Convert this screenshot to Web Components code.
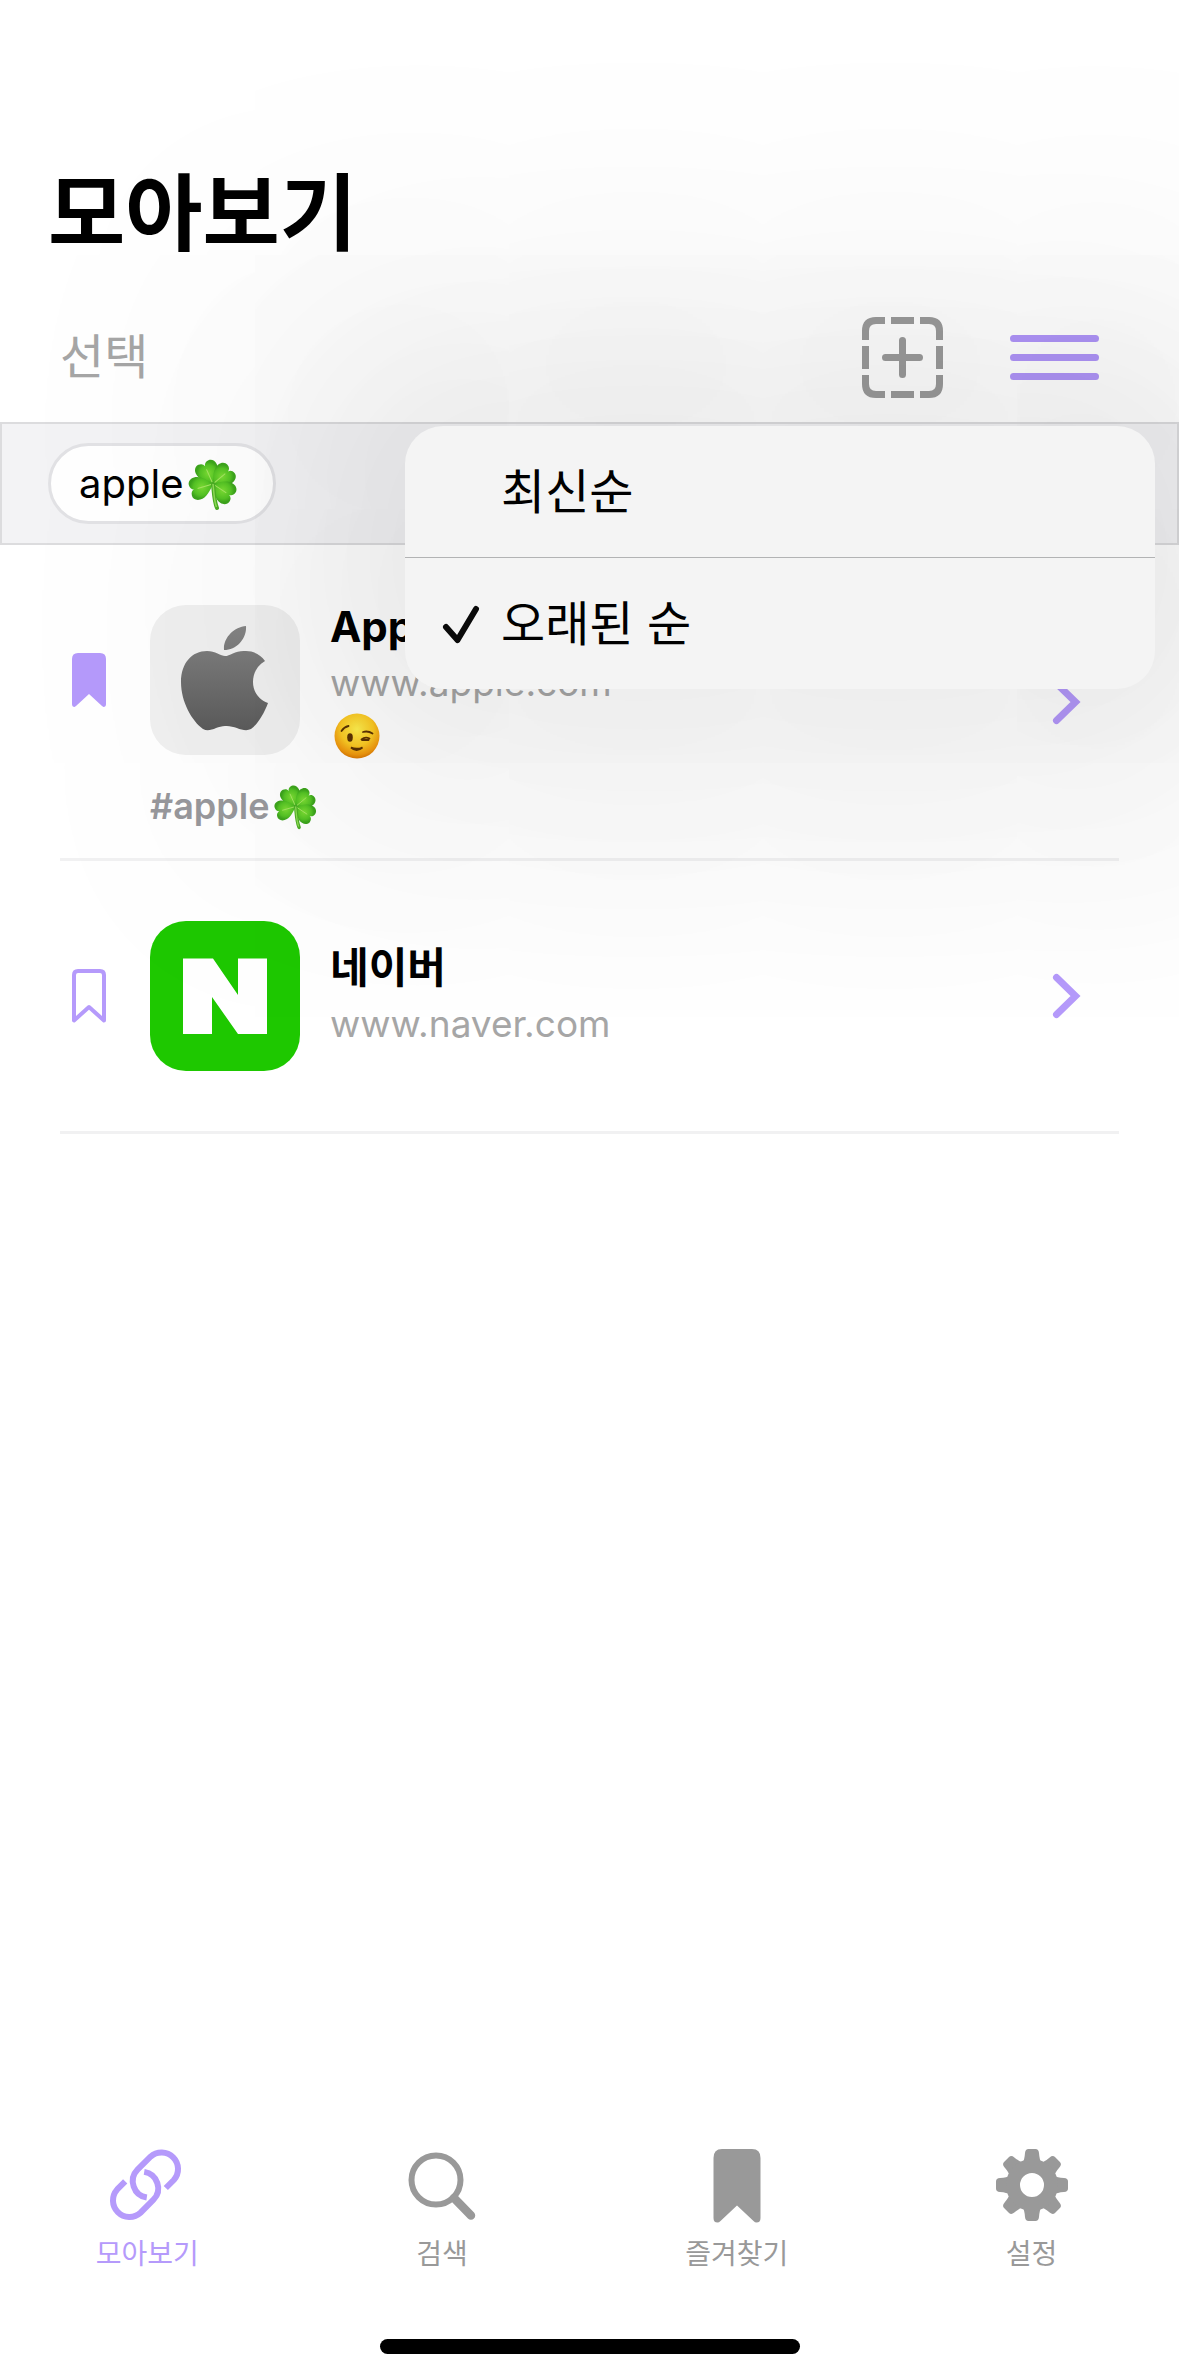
<!DOCTYPE html>
<html lang="ko">
<head>
<meta charset="utf-8">
<meta name="viewport" content="width=device-width, initial-scale=1">
<title>모아보기</title>
<style>
  html, body { margin: 0; }
  body { font-family: Inter, "Noto Sans CJK KR", sans-serif; background: #fff; color: #000; }
</style>
</head>
<body>
<moa-app></moa-app>

<template id="t-app">
  <style>
    :host { display: flex; flex-direction: column; min-height: 100vh; position: relative; overflow: hidden; }
    header { padding: 166px 48px 32px; }
    h1 { margin: 0; font-size: 84px; line-height: 96px; font-weight: 700; }
    main { flex: 1; padding: 0 60px; }
  </style>
  <header><h1>모아보기</h1></header>
  <moa-toolbar></moa-toolbar>
  <moa-filter><moa-chip>apple</moa-chip></moa-filter>
  <main>
    <moa-link marked>
      <moa-logo slot="logo" kind="apple"></moa-logo>
      <span slot="title">Apple</span>
      <span slot="url">www.apple.com</span>
      <moa-emoji slot="memo" kind="wink"></moa-emoji>
      <span slot="tag">#apple</span>
      <moa-emoji slot="tag" kind="clover"></moa-emoji>
    </moa-link>
    <moa-link>
      <moa-logo slot="logo" kind="naver"></moa-logo>
      <span slot="title">네이버</span>
      <span slot="url">www.naver.com</span>
    </moa-link>
  </main>
  <moa-tabs></moa-tabs>
</template>

<template id="t-toolbar">
  <style>
    :host { display: flex; align-items: center; justify-content: space-between; box-sizing: border-box; height: 128px; padding: 0 80px 2px 60px; position: relative; }
    button { border: 0; background: none; padding: 0; margin: 0; font: inherit; display: block; }
    .select { font-size: 48px; line-height: 64px; color: #a6a6a6; }
    .actions { display: flex; align-items: center; gap: 67px; }
    svg { display: block; }
    moa-menu { position: absolute; top: 132px; right: 24px; z-index: 2; }
  </style>
  <button class="select" type="button">선택</button>
  <div class="actions">
    <button type="button" aria-label="추가">
      <svg width="81" height="81" viewBox="0 0 81 81" fill="none" stroke="#9c9c9c" stroke-width="7">
        <path d="M23 3.500H14Q3.500 3.500 3.500 14V23M29 3.500H52M58 3.500H67Q77.500 3.500 77.500 14V23M77.500 29V52M77.500 58V67Q77.500 77.500 67 77.500H58M52 77.500H29M23 77.500H14Q3.500 77.500 3.500 67V58M3.500 52V29"/>
        <path d="M40.500 23.500V57.500M23.500 40.500H57.500" stroke-linecap="round"/>
      </svg>
    </button>
    <button type="button" aria-label="정렬" aria-haspopup="menu" aria-expanded="true">
      <svg width="89" height="45" viewBox="0 0 89 45" fill="none" stroke="#b095f8" stroke-width="7" stroke-linecap="round">
        <path d="M3.500 3.500H85.500M3.500 22.500H85.500M3.500 41.500H85.500"/>
      </svg>
    </button>
  </div>
  <moa-menu></moa-menu>
</template>

<template id="t-menu">
  <style>
    :host { display: block; width: 750px; border-radius: 38px; background: #f4f4f4; box-shadow: 0 0 200px 20px rgba(0,0,0,.05), 0 0 220px 130px rgba(0,0,0,.04), 0 0 240px 250px rgba(0,0,0,.025); }
    button { display: flex; align-items: center; width: 100%; height: 131px; border: 0; margin: 0; padding: 0 36px; background: none; font: inherit; font-size: 48px; line-height: 64px; color: #000; text-align: left; }
    button + button { border-top: 1px solid #b2b3b4; height: 132px; }
    .mark { flex: 0 0 60px; }
    svg { display: block; }
  </style>
  <button type="button" role="menuitemradio" aria-checked="false"><span class="mark"></span><span>최신순</span></button>
  <button type="button" role="menuitemradio" aria-checked="true"><span class="mark"><svg width="40" height="40" viewBox="0 0 40 40" fill="none" stroke="#0a0a0a" stroke-width="6" stroke-linecap="round" stroke-linejoin="round"><path d="M5 23L16.500 36L35 5"/></svg></span><span>오래된 순</span></button>
</template>

<template id="t-filter">
  <style>
    :host { display: flex; padding: 19px 46px; border: 2px solid #dcdcde; background: #f3f3f5; }
  </style>
  <slot></slot>
</template>

<template id="t-chip">
  <style>
    :host { display: block; }
    button { display: flex; align-items: center; gap: 4px; height: 81px; box-sizing: border-box; margin: 0; padding: 0 32px 0 28px; border: 3px solid #e2e2e5; border-radius: 41px; background: #fff; font: inherit; font-size: 40px; line-height: 48px; color: #000; }
    moa-emoji { --size: 54px; }
  </style>
  <button type="button"><slot></slot><moa-emoji kind="clover"></moa-emoji></button>
</template>

<template id="t-link">
  <style>
    :host { display: flex; align-items: center; border-bottom: 3px solid #f1f1f2; padding-right: 38px; }
    .body { flex: 1; display: grid; grid-template-columns: 60px 150px 1fr; grid-template-rows: 168px; gap: 17px 30px; align-items: center; padding: 51px 0; }
    :host([marked]) .body { padding-bottom: 27px; }
    button { border: 0; background: none; margin: 0; padding: 0 0 0 12px; }
    svg { display: block; }
    .text { display: flex; flex-direction: column; font-size: 37px; line-height: 56px; color: #a6a6a6; }
    .title { font-size: 42px; font-weight: 700; color: #000; }
    .memo { --size: 46px; display: flex; align-items: center; height: 50px; padding-left: 4px; }
    .tags { display: none; grid-column: 2 / 4; align-items: center; gap: 4px; font-size: 36px; font-weight: 600; line-height: 50px; color: #98989c; --size: 47px; }
    :host([marked]) .tags { display: flex; }
    .go { padding: 0; }
  </style>
  <div class="body">
    <button type="button" aria-label="즐겨찾기"><svg class="bm" width="34" height="54" viewBox="0 0 34 54"></svg></button>
    <slot name="logo"></slot>
    <div class="text">
      <span class="title"><slot name="title"></slot></span>
      <slot name="url"></slot>
      <span class="memo"><slot name="memo"></slot></span>
    </div>
    <div class="tags"><slot name="tag"></slot></div>
  </div>
  <button class="go" type="button" aria-label="열기">
    <svg width="30" height="48" viewBox="0 0 30 48" fill="none" stroke="#b59afb" stroke-width="7" stroke-linecap="round"><path stroke-linejoin="miter" d="M5.500 5.500L24.500 24L5.500 42.500"/></svg>
  </button>
</template>

<template id="t-tabs">
  <style>
    :host { display: block; }
    nav { display: grid; grid-template-columns: repeat(4, 1fr); padding: 0 0 67px; }
    a { display: flex; flex-direction: column; align-items: center; gap: 13px; color: #999; text-decoration: none; font-size: 28px; line-height: 36px; }
    a[aria-current] { color: #b59afb; }
    svg { display: block; width: 76px; height: 76px; }
    .home { height: 15px; width: 420px; margin: 0 auto 24px; border-radius: 8px; background: #000; }
  </style>
  <nav>
    <a href="#all" aria-current="page">
      <svg viewBox="0 0 76 76" fill="none" stroke="currentColor" stroke-width="6">
        <path d="M56.800 41L64.800 33A16.500 16.500 0 0 0 41.500 9.700L28.500 22.700A16.500 16.500 0 0 0 37.800 50.500"/>
        <path d="M16.200 34.400L8.200 42.400A16.500 16.500 0 0 0 31.500 65.700L44.500 52.700A16.500 16.500 0 0 0 35.200 24.900"/>
      </svg>모아보기</a>
    <a href="#search">
      <svg viewBox="0 0 76 76" fill="none" stroke="currentColor"><circle cx="32" cy="33" r="24.500" stroke-width="6"/><path d="M50 51L67 68.500" stroke-width="8.500" stroke-linecap="round"/></svg>검색</a>
    <a href="#fav">
      <svg viewBox="0 0 76 76" fill="currentColor"><path d="M23 2H53Q61.500 2 61.500 11V71Q61.500 75.500 57.500 75.500Q56 75.500 54.500 74L38 58.500L21.500 74Q20 75.500 18.500 75.500Q14.500 75.500 14.500 71V11Q14.500 2 23 2Z"/></svg>즐겨찾기</a>
    <a href="#settings">
      <svg viewBox="0 0 76 76" fill="currentColor" class="gear"></svg>설정</a>
  </nav>
  <div class="home"></div>
</template>

<script>
  const tpl = id => document.getElementById(id).content.cloneNode(true);
  class Base extends HTMLElement {
    connectedCallback() {
      if (this.shadowRoot) return;
      this.attachShadow({ mode: 'open' });
      this.render(this.shadowRoot);
    }
    render(root) { root.append(tpl(this.constructor.tpl)); }
  }

  class MoaEmoji extends Base {
    render(root) {
      const leaf = (r) => `<g transform="rotate(${r} 24 27)"><path d="M24 27C18 22 12.500 17 12.500 10.500C12.500 6 15.500 3.500 18.500 3.500C21.500 3.500 23.500 5 24 7.500C24.500 5 26.500 3.500 29.500 3.500C32.500 3.500 35.500 6 35.500 10.500C35.500 17 30 22 24 27Z" fill="url(#g)"/><path d="M24 25V11" stroke="#a7e564" stroke-width="1" fill="none"/></g>`;
      const art = {
        clover: `<svg viewBox="0 0 50 54"><defs><radialGradient id="g"><stop offset="0" stop-color="#7bdc34"/><stop offset=".7" stop-color="#55c425"/><stop offset="1" stop-color="#3da51d"/></radialGradient></defs>${leaf(-24)}${leaf(50)}${leaf(124)}${leaf(-106)}<path d="M24 27C25 36 25 44 28 51" fill="none" stroke="#4cae26" stroke-width="4" stroke-linecap="round"/><path d="M24 27C25 36 25 44 27.500 50" fill="none" stroke="#8fdc55" stroke-width="1.500"/></svg>`,
        wink: `<svg viewBox="0 0 46 46"><defs><radialGradient id="f" cx=".5" cy=".35" r=".66"><stop offset="0" stop-color="#fff04f"/><stop offset=".55" stop-color="#fccb25"/><stop offset=".85" stop-color="#f19a10"/><stop offset="1" stop-color="#d97605"/></radialGradient></defs><circle cx="23" cy="23" r="22.500" fill="url(#f)"/><ellipse cx="16" cy="24.500" rx="2.800" ry="4.200" fill="#5c3405"/><g fill="none" stroke="#5c3405" stroke-linecap="round" stroke-width="1.800"><path d="M7.500 18Q10 14 14.500 13"/><path d="M29 19Q34 17.500 38.500 20.500"/><path d="M27.500 26.500Q31 23.500 35.500 25.500M28 27H34.500"/><path d="M17 34.500Q22.500 39.500 28.500 34.500Q22.500 37 17 34.500Z" fill="#5c3405"/></g></svg>`
      };
      const kind = this.getAttribute('kind');
      root.innerHTML = `<style>:host{display:block;width:var(--size);height:var(--size)}svg{display:block;width:100%;height:100%}</style>${art[kind]}`;
      this.setAttribute('role', 'img');
      this.setAttribute('aria-label', kind === 'clover' ? '🍀' : '😉');
    }
  }

  class MoaLogo extends Base {
    render(root) {
      const art = {
        apple: `<defs><linearGradient id="a" x1="0" y1="0" x2="0" y2="1"><stop offset="0" stop-color="#858585"/><stop offset="1" stop-color="#5c5c5c"/></linearGradient></defs><rect width="150" height="150" rx="36" fill="#f0f0f0"/><path fill="url(#a)" d="M96 21C97 33 87 45 74 45C73 33 84 22 96 21ZM75 51C80 51 86 45 96 46C104 46 111 50 115 56C107 61 103 68 103 77C103 87 109 95 118 98C114 109 107 120 101 124C93 128 85 120 75 121C67 121 60 128 53 124C42 116 31 97 31 77C31 58 42 46 57 46C65 46 71 51 75 51Z"/>`,
        naver: `<rect width="150" height="150" rx="36" fill="#1ec800"/><path fill="#fff" d="M33 37.500H63L88 74V37.500H117V113H88L62 76V113H33Z"/>`
      };
      root.innerHTML = `<style>:host,svg{display:block;width:150px;height:150px}</style><svg viewBox="0 0 150 150">${art[this.getAttribute('kind')]}</svg>`;
    }
  }

  class MoaLink extends Base {
    static tpl = 't-link';
    render(root) {
      super.render(root);
      root.querySelector('.bm').innerHTML = this.hasAttribute('marked')
        ? '<path fill="#b59afb" d="M6 0H28Q34 0 34 6V51Q34 54 31.500 54L30 53L17 41L4 53L2.500 54Q0 54 0 51V6Q0 0 6 0Z"/>'
        : '<path fill="none" stroke="#b59afb" stroke-width="4" stroke-linejoin="round" d="M6 2H28Q32 2 32 6V51.500L17 38L2 51.500V6Q2 2 6 2Z"/>';
      if (!this.querySelector('[slot=memo]')) root.querySelector('.memo').remove();
    }
  }

  class MoaTabs extends Base {
    static tpl = 't-tabs';
    render(root) {
      super.render(root);
      let teeth = '';
      for (let i = 0; i < 8; i++) teeth += `<path transform="rotate(${i * 45} 38 38)" d="M28.500 16Q30.500 13 31 6Q31.400 2 34.500 2H41.500Q44.600 2 45 6Q45.500 13 47.500 16Z"/>`;
      root.querySelector('.gear').innerHTML = teeth + '<path fill-rule="evenodd" d="M38 12A26 26 0 1 0 38 64A26 26 0 1 0 38 12ZM38 26A12 12 0 1 1 38 50A12 12 0 1 1 38 26Z"/>';
    }
  }

  customElements.define('moa-emoji', MoaEmoji);
  customElements.define('moa-logo', MoaLogo);
  customElements.define('moa-link', MoaLink);
  customElements.define('moa-tabs', MoaTabs);
  customElements.define('moa-chip', class extends Base { static tpl = 't-chip'; });
  customElements.define('moa-filter', class extends Base { static tpl = 't-filter'; });
  customElements.define('moa-menu', class extends Base { static tpl = 't-menu'; });
  customElements.define('moa-toolbar', class extends Base { static tpl = 't-toolbar'; });
  customElements.define('moa-app', class extends Base { static tpl = 't-app'; });
</script>
</body>
</html>
